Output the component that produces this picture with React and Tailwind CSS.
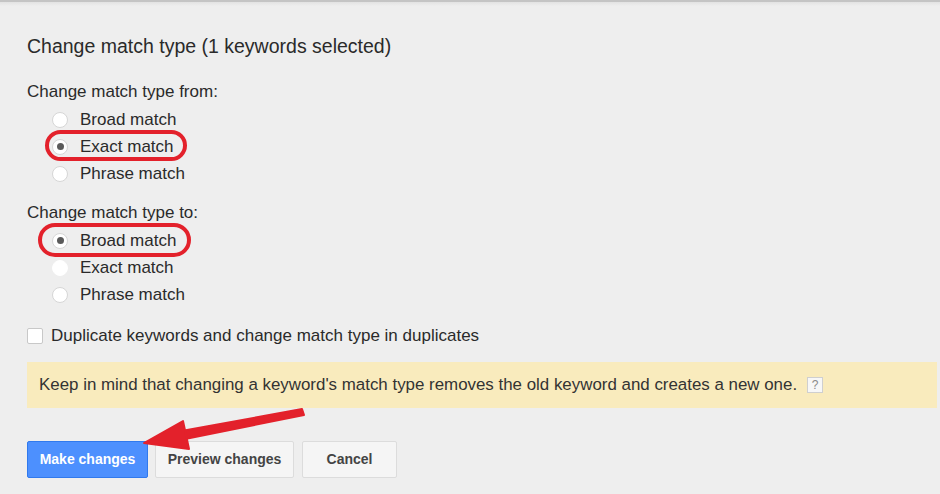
import React, { useState } from 'react';

const Radio = ({ checked, faint }) => (
  <span
    className={`flex h-[16px] w-[16px] items-center justify-center rounded-full bg-white ${
      faint ? 'border border-white' : 'border border-[#d6d6d6]'
    }`}
  >
    {checked && <span className="h-[7px] w-[7px] rounded-full bg-[#5a5a5a]" />}
  </span>
);

const RadioRow = ({ label, checked, faint, ring }) => (
  <div className="relative flex h-[27px] items-center pl-[25px]">
    {ring && <span className={`pointer-events-none absolute rounded-full border-[4px] border-[#e3212b] ${ring}`} />}
    <Radio checked={checked} faint={faint} />
    <span className="ml-[12px] text-[17px] text-[#2a2a2a]">{label}</span>
  </div>
);

const App = () => {
  const [dup, setDup] = useState(false);

  return (
    <div
      className="relative h-[494px] w-[940px] overflow-hidden bg-[#eeeeee]"
      style={{ fontFamily: '"Liberation Sans", Arial, sans-serif' }}
    >
      <div className="h-[2px] bg-[#c4c4c4]" />
      <div className="h-[4px] bg-gradient-to-b from-[#e2e2e2] to-[#eeeeee]" />

      <div className="flex flex-col pl-[27px]">
        <h2 className="mt-[28px] h-[24px] text-[19.5px] leading-[24px] text-[#2a2a2a]">
          Change match type (1 keywords selected)
        </h2>

        <div className="mt-[24px] h-[20px] text-[17px] leading-[20px] text-[#2a2a2a]">Change match type from:</div>
        <div className="mt-[4px] flex flex-col">
          <RadioRow label="Broad match" />
          <RadioRow label="Exact match" checked ring="left-[18px] top-[-3px] h-[31px] w-[142px]" />
          <RadioRow label="Phrase match" />
        </div>

        <div className="mt-[16px] h-[20px] text-[17px] leading-[20px] text-[#2a2a2a]">Change match type to:</div>
        <div className="mt-[4px] flex flex-col">
          <RadioRow label="Broad match" checked ring="left-[11px] top-[-4px] h-[34px] w-[153px]" />
          <RadioRow label="Exact match" faint />
          <RadioRow label="Phrase match" />
        </div>

        <label className="mt-[18px] flex h-[20px] cursor-pointer items-center">
          <span
            onClick={() => setDup(!dup)}
            className="h-[16px] w-[16px] rounded-[2px] border border-[#c8c8c8] bg-white"
          />
          <span className="ml-[8px] text-[17px] text-[#2a2a2a]">Duplicate keywords and change match type in duplicates</span>
        </label>

        <div className="mr-[3px] mt-[16px] flex h-[46px] items-center bg-[#f9ebbd] pl-[12px]">
          <span className="text-[16.9px] text-[#333333]">
            Keep in mind that changing a keyword's match type removes the old keyword and creates a new one.
          </span>
          <span className="ml-[10px] flex h-[16px] w-[16px] items-center justify-center border border-[#cfcfcf] bg-[#f7f7f7] text-[12px] leading-none text-[#8a8a8a]">
            ?
          </span>
        </div>

        <div className="mt-[33px] flex gap-[7px]">
          <button className="h-[37px] w-[121px] rounded-[2px] border border-[#3079ed] bg-[#4d90fe] text-[14px] font-bold text-white">
            Make changes
          </button>
          <button className="h-[37px] w-[139px] rounded-[2px] border border-[#dcdcdc] bg-[#f5f5f5] text-[14px] font-bold text-[#444444]">
            Preview changes
          </button>
          <button className="ml-[1px] h-[37px] w-[95px] rounded-[2px] border border-[#dcdcdc] bg-[#f5f5f5] text-[14px] font-bold text-[#444444]">
            Cancel
          </button>
        </div>
      </div>

      <svg className="pointer-events-none absolute left-0 top-0" width="940" height="494" viewBox="0 0 940 494">
        <polygon points="302,409 304,415 180,440 176,432" fill="#e3212b" stroke="#e3212b" strokeWidth="2" strokeLinejoin="round" />
        <polygon points="144,443 183,421 189,449" fill="#e3212b" stroke="#e3212b" strokeWidth="2" strokeLinejoin="round" />
      </svg>
    </div>
  );
};

export default App;
